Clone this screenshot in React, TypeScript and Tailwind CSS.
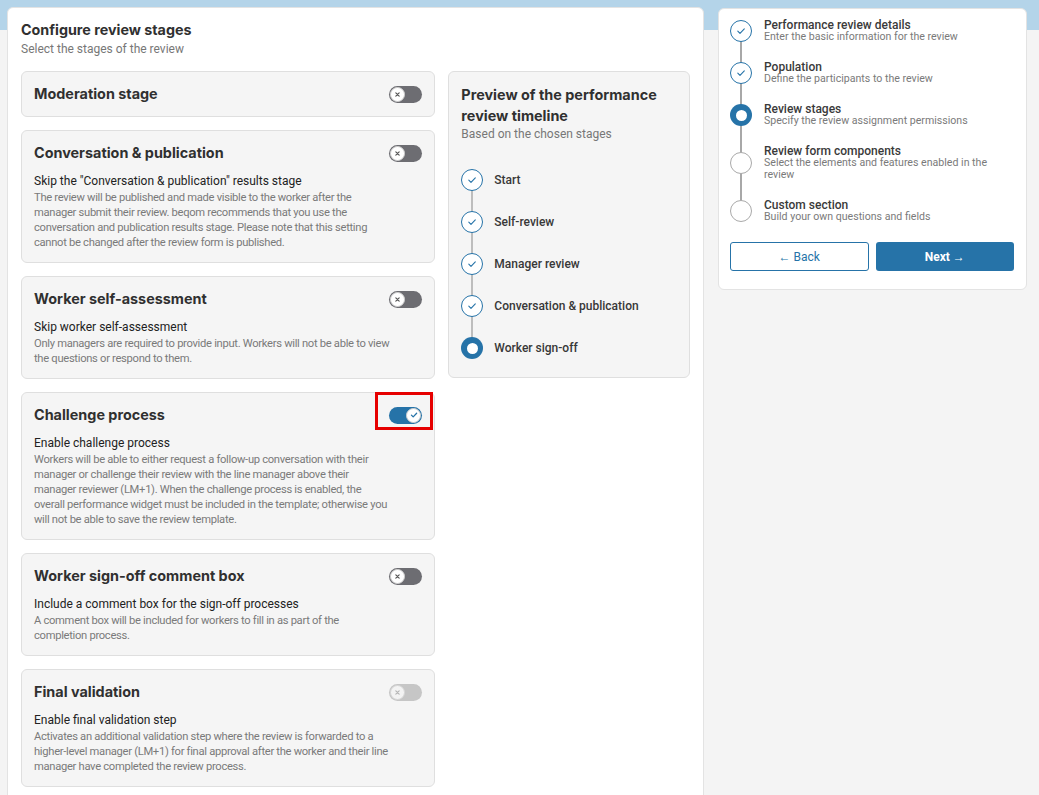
import clsx from "clsx";

const blue = "#2673a8";

type ToggleState = "off" | "on" | "disabled";

const stages: { title: string; toggle: ToggleState; sub?: string; desc?: string; flagged?: boolean }[] = [
  { title: "Moderation stage", toggle: "off" },
  {
    title: "Conversation & publication",
    toggle: "off",
    sub: 'Skip the "Conversation & publication" results stage',
    desc: "The review will be published and made visible to the worker after the manager submit their review. beqom recommends that you use the conversation and publication results stage. Please note that this setting cannot be changed after the review form is published.",
  },
  {
    title: "Worker self-assessment",
    toggle: "off",
    sub: "Skip worker self-assessment",
    desc: "Only managers are required to provide input. Workers will not be able to view the questions or respond to them.",
  },
  {
    title: "Challenge process",
    toggle: "on",
    flagged: true,
    sub: "Enable challenge process",
    desc: "Workers will be able to either request a follow-up conversation with their manager or challenge their review with the line manager above their manager reviewer (LM+1). When the challenge process is enabled, the overall performance widget must be included in the template; otherwise you will not be able to save the review template.",
  },
  {
    title: "Worker sign-off comment box",
    toggle: "off",
    sub: "Include a comment box for the sign-off processes",
    desc: "A comment box will be included for workers to fill in as part of the completion process.",
  },
  {
    title: "Final validation",
    toggle: "disabled",
    sub: "Enable final validation step",
    desc: "Activates an additional validation step where the review is forwarded to a higher-level manager (LM+1) for final approval after the worker and their line manager have completed the review process.",
  },
];

const timeline = ["Start", "Self-review", "Manager review", "Conversation & publication", "Worker sign-off"];

const steps: { title: string; desc: string; status: "done" | "current" | "todo" }[] = [
  { title: "Performance review details", desc: "Enter the basic information for the review", status: "done" },
  { title: "Population", desc: "Define the participants to the review", status: "done" },
  { title: "Review stages", desc: "Specify the review assignment permissions", status: "current" },
  { title: "Review form components", desc: "Select the elements and features enabled in the review", status: "todo" },
  { title: "Custom section", desc: "Build your own questions and fields", status: "todo" },
];

function Check({ color = blue }: { color?: string }) {
  return (
    <svg width="10" height="10" viewBox="0 0 10 10" fill="none">
      <path d="M1.8 5.1 L4 7.3 L8.3 2.8" stroke={color} strokeWidth="1.1" strokeLinecap="round" strokeLinejoin="round" />
    </svg>
  );
}

function Toggle({ state }: { state: ToggleState }) {
  const on = state === "on";
  const disabled = state === "disabled";
  return (
    <div
      className={clsx(
        "flex h-[17px] w-[33px] shrink-0 items-center rounded-full px-[1px]",
        on ? "justify-end bg-[#2673a8]" : disabled ? "bg-[#c6c6c6]" : "bg-[#6d6d72]"
      )}
    >
      <div
        className={clsx(
          "flex h-[15px] w-[15px] items-center justify-center rounded-full border",
          disabled ? "border-[#d6d6d6] bg-[#f3f3f3]" : "border-[#d0d0d0] bg-white"
        )}
      >
        {on ? (
          <svg width="8" height="8" viewBox="0 0 10 10" fill="none">
            <path d="M1.8 5.2 L4 7.3 L8.3 2.8" stroke={blue} strokeWidth="1.6" strokeLinecap="round" strokeLinejoin="round" />
          </svg>
        ) : (
          <svg width="5" height="5" viewBox="0 0 6 6" fill="none">
            <path d="M1 1 L5 5 M5 1 L1 5" stroke={disabled ? "#b5b5b5" : "#555"} strokeWidth="1.4" strokeLinecap="round" />
          </svg>
        )}
      </div>
    </div>
  );
}

function StepCircle({ status }: { status: "done" | "current" | "todo" }) {
  if (status === "current")
    return (
      <div className="flex h-[22px] w-[22px] shrink-0 items-center justify-center rounded-full bg-[#2673a8]">
        <div className="h-[11px] w-[11px] rounded-full bg-white" />
      </div>
    );
  if (status === "done")
    return (
      <div className="flex h-[22px] w-[22px] shrink-0 items-center justify-center rounded-full border border-[#2673a8] bg-white">
        <Check />
      </div>
    );
  return <div className="h-[22px] w-[22px] shrink-0 rounded-full border border-[#a9a9a9] bg-white" />;
}

const heading = "font-['Inter',sans-serif] font-bold text-[#303030]";

export default function App() {
  return (
    <div className="h-[795px] w-full overflow-hidden bg-[linear-gradient(to_bottom,#b4d4e9_0px,#b4d4e9_30px,#f4f4f4_30px)] font-['Roboto',sans-serif] text-[#2b2b2b]">
      <div className="flex items-start gap-[14px] pl-[7px] pt-[7px]">
        {/* Main panel */}
        <main className="min-h-[830px] w-[697px] rounded-md border border-[#e3e3e3] bg-white px-[13px] pt-[12px]">
          <h1 className={clsx(heading, "text-[14.3px] leading-[20px] text-[#222]")}>Configure review stages</h1>
          <p className="mt-[1px] text-[12px] leading-[16px] text-[#777]">Select the stages of the review</p>

          <div className="mt-[14px] flex items-start gap-[13px]">
            <div className="flex w-[415px] flex-col gap-[13px]">
              {stages.map((s) => (
                <div
                  key={s.title}
                  className={clsx(
                    "relative rounded-md border border-[#dfdfdf] bg-[#f5f5f5] px-[12px] pt-[11px]",
                    s.sub ? "pb-[12px]" : "pb-[11px]"
                  )}
                >
                  <div className="flex items-center justify-between">
                    <h3 className={clsx(heading, "text-[14.4px] leading-[22px]")}>{s.title}</h3>
                    <Toggle state={s.toggle} />
                  </div>
                  {s.sub && <p className="mt-[8px] text-[12px] leading-[18px] text-[#222]">{s.sub}</p>}
                  {s.desc && (
                    <p className="max-w-[357px] text-[11.2px] leading-[15px] tracking-[-0.3px] text-[#7a7a7a]">{s.desc}</p>
                  )}
                  {s.flagged && (
                    <div className="absolute left-[353px] top-[-1px] h-[38px] w-[58px] border-[3px] border-[#e60000]" />
                  )}
                </div>
              ))}
            </div>

            {/* Timeline preview */}
            <div className="w-[242px] rounded-md border border-[#dfdfdf] bg-[#f5f5f5] px-[12px] pb-[18px] pt-[12px]">
              <h2 className={clsx(heading, "text-[14.4px] leading-[21px]")}>Preview of the performance review timeline</h2>
              <p className="text-[12px] leading-[16px] text-[#777]">Based on the chosen stages</p>
              <div className="relative mt-[27px] flex flex-col gap-[20px]">
                <div className="absolute bottom-[11px] left-[10px] top-[11px] w-[1.5px] bg-[#bdbdbd]" />
                {timeline.map((t, i) => (
                  <div key={t} className="relative flex h-[22px] items-center gap-[11px]">
                    <StepCircle status={i === timeline.length - 1 ? "current" : "done"} />
                    <span className="text-[12px] font-medium text-[#383838]">{t}</span>
                  </div>
                ))}
              </div>
            </div>
          </div>
        </main>

        {/* Stepper */}
        <aside className="mt-[1px] w-[309px] rounded-md border border-[#e3e3e3] bg-white pb-[18px] pl-[11px] pr-[12px] pt-[10px]">
          <div className="relative flex flex-col gap-[18px]">
            <div className="absolute bottom-[12px] left-[10px] top-[12px] w-[2px] bg-[#a8a8a8]" />
            {steps.map((s) => (
              <div key={s.title} className="relative flex items-center gap-[12px]">
                <StepCircle status={s.status} />
                <div>
                  <p className="text-[12px] font-medium leading-[12px] text-[#3a3a3a]">{s.title}</p>
                  <p className="text-[10.6px] leading-[12px] text-[#7a7a7a]">{s.desc}</p>
                </div>
              </div>
            ))}
          </div>
          <div className="mt-[19px] grid grid-cols-2 gap-[7px]">
            <button className="h-[29px] rounded-[3px] border border-[#2673a8] bg-white text-[12px] text-[#2673a8]">
              ← Back
            </button>
            <button className="h-[29px] rounded-[3px] bg-[#2673a8] text-[12px] font-bold text-white">Next →</button>
          </div>
        </aside>
      </div>
    </div>
  );
}
